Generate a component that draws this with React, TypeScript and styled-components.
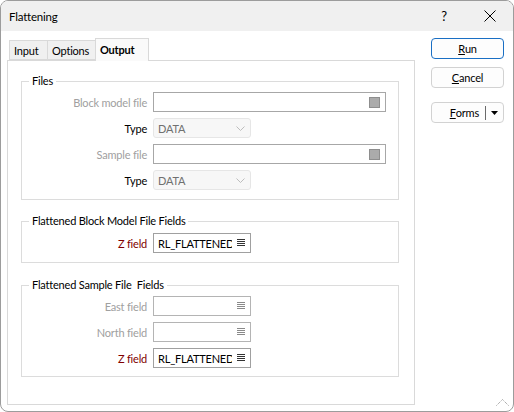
import React from "react";
import styled, { createGlobalStyle } from "styled-components";

const GlobalStyle = createGlobalStyle`
  html, body {
    margin: 0;
    padding: 0;
    background: #ffffff;
  }
  body {
    font-family: "Lato", "Liberation Sans", sans-serif;
    font-size: 11px;
    letter-spacing: -0.2px;
    color: #000000;
  }
`;

const Window = styled.div`
  position: relative;
  box-sizing: border-box;
  width: 514px;
  height: 412px;
  border: 1px solid #9c9c9c;
  border-radius: 8px;
  overflow: hidden;
  background: #ffffff;
  display: flex;
  flex-direction: column;
`;

const TitleBar = styled.div`
  height: 30px;
  flex: none;
  display: flex;
  align-items: center;
  background: #f0f0f0;
  padding-left: 8px;
`;

const TitleText = styled.div`
  flex: 1;
  font-size: 11.5px;
`;

const CaptionButton = styled.div`
  width: 46px;
  height: 30px;
  display: flex;
  align-items: center;
  justify-content: center;
  font-size: 13px;
`;

const Body = styled.div`
  flex: 1;
  display: flex;
  padding: 7px 9px 6px 6px;
  gap: 16px;
  min-height: 0;
`;

const LeftColumn = styled.div`
  width: 408px;
  display: flex;
  flex-direction: column;
`;

const TabRow = styled.div`
  position: relative;
  z-index: 2;
  height: 22px;
  display: flex;
  align-items: flex-start;
  padding-left: 2px;
`;

const Tab = styled.div<{ $active?: boolean; $w: number }>`
  box-sizing: border-box;
  width: ${(p) => p.$w + 1}px;
  height: ${(p) => (p.$active ? "23px" : "20px")};
  margin-top: ${(p) => (p.$active ? "0" : "2px")};
  margin-right: -1px;
  padding: 0 0 0 4px;
  display: flex;
  align-items: center;
  border: 1px solid #d9d9d9;
  border-bottom: ${(p) => (p.$active ? "none" : "1px solid #d9d9d9")};
  background: ${(p) => (p.$active ? "#fafafa" : "#f0f0f0")};
  font-weight: ${(p) => (p.$active ? 700 : 400)};
  padding-bottom: ${(p) => (p.$active ? "1px" : "0")};
`;

const Panel = styled.div`
  position: relative;
  z-index: 1;
  flex: 1;
  box-sizing: border-box;
  border: 1px solid #d9d9d9;
  padding: 12px 15px 0 13px;
  display: flex;
  flex-direction: column;
`;

const Group = styled.fieldset<{ $top: number; $pt: number; $pb: number }>`
  margin: ${(p) => p.$top}px 0 0 0;
  min-width: 0;
  border: 1px solid #dcdcdc;
  padding: ${(p) => p.$pt}px 0 ${(p) => p.$pb}px 0;
`;

const Legend = styled.legend`
  margin-left: 7px;
  padding: 0 3px;
  line-height: 16px;
  white-space: pre;
`;

const Rows = styled.div`
  display: flex;
  flex-direction: column;
  gap: 6px;
`;

const Row = styled.div`
  display: flex;
  align-items: center;
  gap: 6px;
  height: 20px;
`;

const Label = styled.div<{ $tone: "disabled" | "normal" | "key" }>`
  width: 125px;
  text-align: right;
  color: ${(p) =>
    p.$tone === "disabled" ? "#a0a0a0" : p.$tone === "key" ? "#800000" : "#000000"};
`;

const FileBox = styled.div`
  box-sizing: border-box;
  width: 233px;
  height: 20px;
  border: 1px solid #a7a7a7;
  display: flex;
  align-items: center;
  justify-content: flex-end;
  padding-right: 5px;
`;

const BrowseSquare = styled.div`
  box-sizing: border-box;
  width: 11px;
  height: 11px;
  background: #ababab;
  border: 1px solid #8e8e8e;
`;

const Combo = styled.div`
  box-sizing: border-box;
  width: 98px;
  height: 20px;
  border: 1px solid #e6e6e6;
  border-radius: 3px;
  background: #f7f7f7;
  display: flex;
  align-items: center;
  padding: 0 5px 0 4px;
  color: #707070;
`;

const ComboText = styled.span`
  flex: 1;
`;

const FieldBox = styled.div<{ $disabled?: boolean }>`
  box-sizing: border-box;
  width: 98px;
  height: 20px;
  border: 1px solid ${(p) => (p.$disabled ? "#b4b4b4" : "#a0a0a0")};
  display: flex;
  align-items: center;
  padding: 0 5px 0 4px;
`;

const FieldText = styled.span`
  width: 74px;
  overflow: hidden;
  white-space: nowrap;
  flex: none;
`;

const Spacer = styled.span`
  flex: 1;
`;

const RightColumn = styled.div`
  width: 73px;
  display: flex;
  flex-direction: column;
`;

const Button = styled.div<{ $primary?: boolean; $gap?: number }>`
  box-sizing: border-box;
  height: 21px;
  margin-top: ${(p) => p.$gap ?? 0}px;
  border: 1px solid ${(p) => (p.$primary ? "#1a6fc4" : "#d2d2d2")};
  border-radius: 4px;
  background: #fdfdfd;
  display: flex;
  align-items: center;
  justify-content: center;
`;

const SplitButton = styled(Button)`
  justify-content: flex-end;
  padding-right: 5px;
`;

const Separator = styled.span`
  width: 1px;
  height: 14px;
  background: #6a6a6a;
  margin: 0 5px 0 6px;
`;

const Mnemonic = styled.span`
  text-decoration: underline;
`;

const Grip = styled.svg`
  position: absolute;
  right: 4px;
  bottom: 5px;
`;

function ListIcon({ dim }: { dim?: boolean }) {
  const c = dim ? "#8a8a8a" : "#333333";
  return (
    <svg width="8" height="8" viewBox="0 0 8 8">
      {[0.5, 2.5, 4.5, 6.5].map((y) => (
        <line key={y} x1="0" y1={y} x2="8" y2={y} stroke={c} strokeWidth="1" />
      ))}
    </svg>
  );
}

function Chevron() {
  return (
    <svg width="9" height="5" viewBox="0 0 9 5">
      <polyline points="0.5,0.5 4.5,4.5 8.5,0.5" fill="none" stroke="#bdbdbd" strokeWidth="1" />
    </svg>
  );
}

function FileRow({ label }: { label: string }) {
  return (
    <Row>
      <Label $tone="disabled">{label}</Label>
      <FileBox>
        <BrowseSquare />
      </FileBox>
    </Row>
  );
}

function TypeRow() {
  return (
    <Row>
      <Label $tone="normal">Type</Label>
      <Combo>
        <ComboText>DATA</ComboText>
        <Chevron />
      </Combo>
    </Row>
  );
}

function FieldRow({ label, value, disabled }: { label: string; value?: string; disabled?: boolean }) {
  return (
    <Row>
      <Label $tone={disabled ? "disabled" : "key"}>{label}</Label>
      <FieldBox $disabled={disabled}>
        <FieldText>{value}</FieldText>
        <Spacer />
        <ListIcon dim={disabled} />
      </FieldBox>
    </Row>
  );
}

export default function App() {
  return (
    <>
      <GlobalStyle />
      <Window>
        <TitleBar>
          <TitleText>Flattening</TitleText>
          <CaptionButton>?</CaptionButton>
          <CaptionButton>
            <svg width="12" height="12" viewBox="0 0 12 12">
              <line x1="0.5" y1="0.5" x2="11.5" y2="11.5" stroke="#000" strokeWidth="1" />
              <line x1="11.5" y1="0.5" x2="0.5" y2="11.5" stroke="#000" strokeWidth="1" />
            </svg>
          </CaptionButton>
        </TitleBar>
        <Body>
          <LeftColumn>
            <TabRow>
              <Tab $w={38}>Input</Tab>
              <Tab $w={48}>Options</Tab>
              <Tab $w={53} $active>Output</Tab>
            </TabRow>
            <Panel>
              <Group $top={0} $pt={3} $pb={9}>
                <Legend>Files</Legend>
                <Rows>
                  <FileRow label="Block model file" />
                  <TypeRow />
                  <FileRow label="Sample file" />
                  <TypeRow />
                </Rows>
              </Group>
              <Group $top={13} $pt={4} $pb={9}>
                <Legend>Flattened Block Model File Fields</Legend>
                <Rows>
                  <FieldRow label="Z field" value="RL_FLATTENED" />
                </Rows>
              </Group>
              <Group $top={14} $pt={3} $pb={8}>
                <Legend>{"Flattened Sample File  Fields"}</Legend>
                <Rows>
                  <FieldRow label="East field" disabled />
                  <FieldRow label="North field" disabled />
                  <FieldRow label="Z field" value="RL_FLATTENED" />
                </Rows>
              </Group>
            </Panel>
          </LeftColumn>
          <RightColumn>
            <Button $primary>
              <Mnemonic>R</Mnemonic>un
            </Button>
            <Button $gap={8}>
              <Mnemonic>C</Mnemonic>ancel
            </Button>
            <SplitButton $gap={14}>
              <Mnemonic>F</Mnemonic>orms
              <Separator />
              <svg width="7" height="4" viewBox="0 0 7 4">
                <polygon points="0,0 7,0 3.5,4" fill="#000" />
              </svg>
            </SplitButton>
          </RightColumn>
        </Body>
        <Grip width="13" height="7" viewBox="0 0 13 7">
          <polyline points="0.5,6.5 6.5,0.5 12.5,6.5" fill="none" stroke="#8a8a8a" strokeWidth="1" strokeDasharray="1 1" />
        </Grip>
      </Window>
    </>
  );
}
